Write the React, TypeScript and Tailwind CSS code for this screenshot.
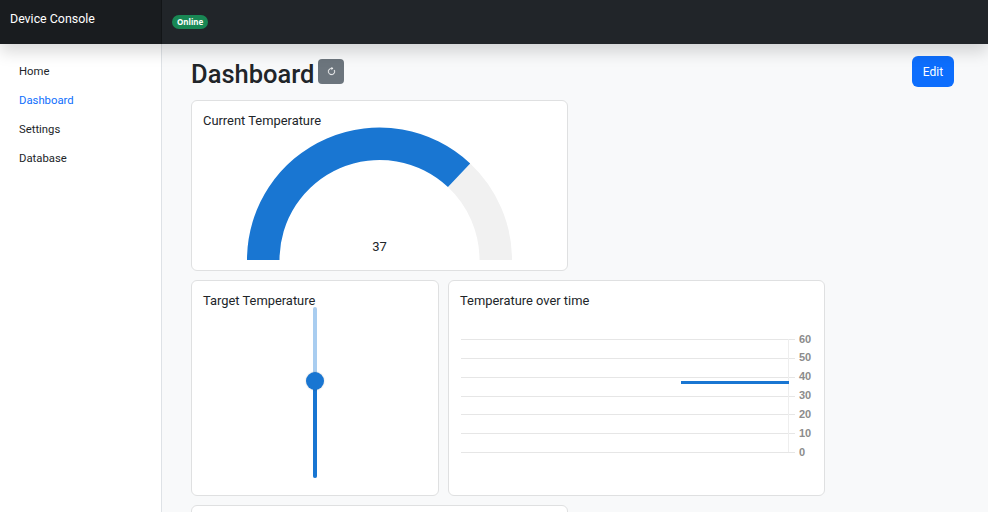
import React from "react";

const R = 132.5;
const r0 = 100;
function polar(r: number, deg: number) {
  const a = (deg * Math.PI) / 180;
  return `${R - r * Math.cos(a)} ${R + 0.5 - r * Math.sin(a)}`;
}
function arc(from: number, to: number) {
  return `M${polar(R, from)} A${R} ${R} 0 0 1 ${polar(R, to)} L${polar(r0, to)} A${r0} ${r0} 0 0 0 ${polar(r0, from)} Z`;
}

function Card({ className, title, children }: { className: string; title: string; children?: React.ReactNode }) {
  return (
    <div className={`bg-white border border-[#dfe0e1] rounded-[6px] px-[11px] pt-[8px] shrink-0 ${className}`}>
      <div className="text-[12.9px] leading-6 text-[#212529]">{title}</div>
      {children}
    </div>
  );
}

function Gauge() {
  return (
    <svg width="265" height="133" viewBox="0 0 265 133" className="block mx-auto -mt-[6px]">
      <path d={arc(133.2, 180)} fill="#f1f1f1" />
      <path d={arc(0, 133.2)} fill="#1976d2" />
      <text x="132.5" y="124" textAnchor="middle" fontSize="13" fill="#212529" fontFamily="Roboto, sans-serif">37</text>
    </svg>
  );
}

function Slider() {
  return (
    <div className="relative w-1 h-[171px] mx-auto -mt-[6px] rounded-full bg-[#a9cdf0]">
      <div className="absolute left-0 right-0 bottom-0 h-[97px] rounded-b-full bg-[#1976d2]" />
      <div className="absolute -left-[7px] top-[65px] w-[18px] h-[18px] rounded-full bg-[#1976d2] shadow-[0_0_2px_rgba(0,0,0,0.2)]" />
    </div>
  );
}

function Chart() {
  const rows: [number, number, string][] = [[339, 339, "60"], [358, 357, "50"], [377, 376, "40"], [396, 395, "30"], [414, 414, "20"], [433, 433, "10"], [452, 452, "0"]];
  return (
    <svg width="364" height="150" viewBox="460 320 364 150" className="block mt-[7px]">
      {rows.map(([y, ty, l]) => (
        <g key={l}>
          <line x1="461" x2="795" y1={y + 0.5} y2={y + 0.5} stroke="#e6e6e6" />
          <text x="799" y={ty + 4} fontSize="11" fontWeight="700" fill="#8c8c8c" fontFamily="'Liberation Sans', sans-serif">{l}</text>
        </g>
      ))}
      <line x1="788.5" x2="788.5" y1="339" y2="452" stroke="#eeeeee" />
      <line x1="681" x2="789" y1="382.5" y2="382.5" stroke="#1976d2" strokeWidth="3" />
    </svg>
  );
}

export default function App() {
  return (
    <div className="h-[512px] w-[988px] overflow-hidden flex flex-col bg-[#f8f9fa] font-['Roboto',sans-serif]">
      <header className="relative z-10 h-[44px] shrink-0 flex bg-[#212529] shadow-[0_8px_16px_rgba(0,0,0,0.15)]">
        <div className="w-[162px] pl-[10px] pt-[7px] bg-[#191c1f] text-white text-[12.4px] leading-6 shadow-[inset_-1px_0_0_rgba(0,0,0,0.25)]">Device Console</div>
        <div className="pl-[10px] pt-[15px]">
          <span className="flex items-center h-[14px] px-[5px] rounded-full bg-[#198754] text-white text-[8px] font-bold font-['Noto_Sans',sans-serif]">Online</span>
        </div>
      </header>
      <div className="flex flex-1 min-h-0">
        <nav className="w-[162px] shrink-0 bg-white border-r border-[#dee2e6] pt-[16px] pl-[19px] flex flex-col gap-[5px] text-[11.3px] leading-6 text-[#212529]">
          <a>Home</a>
          <a className="text-[#0d6efd]">Dashboard</a>
          <a>Settings</a>
          <a>Database</a>
        </nav>
        <main className="flex-1 min-w-0 pl-[29px] pr-[34px] pt-[12px]">
          <div className="flex justify-between items-start h-[31px]">
            <div className="flex items-start">
              <h1 className="text-[25.5px] leading-[36px] font-medium text-[#212529]">Dashboard</h1>
              <button className="ml-[4px] mt-[3px] w-[26px] h-[25px] rounded-[4px] bg-[#6c757d] flex items-center justify-center">
                <svg width="9" height="9" viewBox="0 0 16 16" fill="#fff" stroke="#fff" strokeWidth="0.5">
                  <path fillRule="evenodd" d="M8 3a5 5 0 1 0 4.546 2.914.5.5 0 0 1 .908-.417A6 6 0 1 1 8 2z" />
                  <path d="M8 4.466V.534a.25.25 0 0 1 .41-.192l2.36 1.966c.12.1.12.284 0 .384L8.41 4.658A.25.25 0 0 1 8 4.466" />
                </svg>
              </button>
            </div>
            <button className="w-[42px] h-[31px] rounded-[6px] bg-[#0d6efd] text-white text-[12px]">Edit</button>
          </div>
          <div className="mt-[13px] flex flex-col gap-[9px]">
            <Card className="w-[377px] h-[171px]" title="Current Temperature"><Gauge /></Card>
            <div className="flex gap-[9px]">
              <Card className="w-[248px] h-[216px]" title="Target Temperature"><Slider /></Card>
              <Card className="w-[377px] h-[216px]" title="Temperature over time"><Chart /></Card>
            </div>
            <Card className="w-[377px] h-[100px]" title="" />
          </div>
        </main>
      </div>
    </div>
  );
}
